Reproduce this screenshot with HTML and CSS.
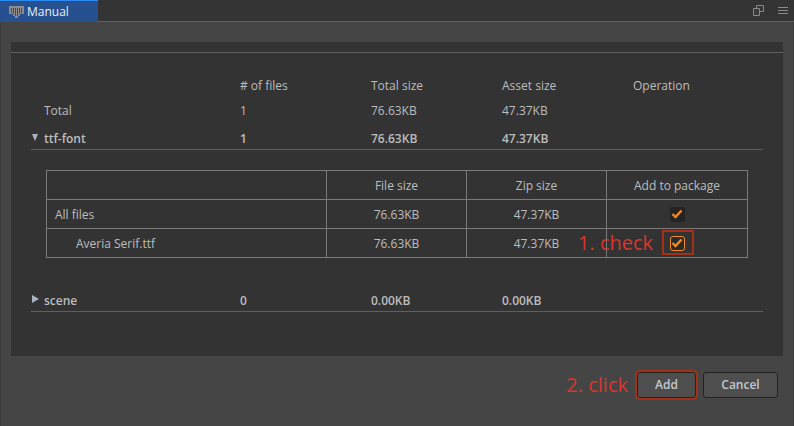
FILE: index.html
```html
<!DOCTYPE html>
<html lang="en">
<head>
    <meta charset="UTF-8">
    <title>Manual</title>
    <link rel="stylesheet" href="styles.css">
</head>
<body>
    <div class="tabbar">
        <div class="tab">
            <svg class="tab-icon" width="15" height="12" viewBox="0 0 15 12">
                <path d="M0 0h15v8h-4v2h-2v2h-3v-2h-2v-2h-4z" fill="#8c8c8c"/>
                <path d="M2.5 2v5M4.5 2v6M6.5 2v8M8.5 2v8M10.5 2v6M12.5 2v5" stroke="#4c4c4c" stroke-width="1" fill="none"/>
            </svg>
            <span>Manual</span>
        </div>
        <div class="tab-tools">
            <svg width="11" height="11" viewBox="0 0 11 11">
                <path d="M3.5 .5h7v6h-7z" fill="none" stroke="#8a8a8a"/>
                <path d="M.5 3.5h6v7h-6z" fill="#3a3a3a" stroke="#8a8a8a"/>
            </svg>
            <svg width="10" height="9" viewBox="0 0 10 9">
                <path d="M0 1.5h10M0 4.5h10M0 7.5h10" stroke="#8a8a8a"/>
            </svg>
        </div>
    </div>

    <div class="main">
        <div class="panel">
            <div class="panel-top"></div>

            <div class="row head-row">
                <span></span><span># of files</span><span>Total size</span><span>Asset size</span><span>Operation</span>
            </div>
            <div class="row total-row">
                <span>Total</span><span>1</span><span>76.63KB</span><span>47.37KB</span><span></span>
            </div>
            <div class="row group-row">
                <span class="group-name"><i class="arrow-down"></i>ttf-font</span><span>1</span><span>76.63KB</span><span>47.37KB</span><span></span>
            </div>

            <div class="files">
                <div class="cell"></div>
                <div class="cell center">File size</div>
                <div class="cell center">Zip size</div>
                <div class="cell center">Add to package</div>

                <div class="cell">All files</div>
                <div class="cell center">76.63KB</div>
                <div class="cell center">47.37KB</div>
                <div class="cell center"><span class="check"><svg width="12" height="10" viewBox="0 0 12 10"><path d="M1.5 5l3 3 6-6.500" fill="none" stroke="#f58a24" stroke-width="2.400"/></svg></span></div>

                <div class="cell indent">Averia Serif.ttf</div>
                <div class="cell center">76.63KB</div>
                <div class="cell center">47.37KB</div>
                <div class="cell center"><span class="check hot"><svg width="12" height="10" viewBox="0 0 12 10"><path d="M1.5 5l3 3 6-6.500" fill="none" stroke="#f58a24" stroke-width="2.400"/></svg></span></div>
            </div>

            <div class="row group-row scene-row">
                <span class="group-name"><i class="arrow-right"></i>scene</span><span>0</span><span>0.00KB</span><span>0.00KB</span><span></span>
            </div>

            <div class="note note-check">1. check</div>
            <div class="mark mark-check"></div>
        </div>

        <div class="footer">
            <div class="note note-click">2. click</div>
            <button class="btn btn-add">Add</button>
            <button class="btn">Cancel</button>
        </div>
    </div>
</body>
</html>
```

FILE: styles.css
```css
html, body {
    margin: 0;
    padding: 0;
}
body {
    width: 794px;
    height: 426px;
    overflow: hidden;
    background-color: #454545;
    color: #bdbdbd;
    font-family: Tahoma, "Open Sans", sans-serif;
    font-size: 12px;
}
.tabbar {
    display: flex;
    justify-content: space-between;
    height: 21px;
    background-color: #343434;
    border-bottom: 1px solid #5f5f5f;
}
.tab {
    display: flex;
    align-items: center;
    gap: 3px;
    box-sizing: border-box;
    width: 98px;
    height: 22px;
    padding-left: 9px;
    background-color: #26508f;
    border-top: 1px solid #2a8bf0;
    color: #e8eef6;
    font-size: 12px;
}
.tab-tools {
    display: flex;
    align-items: center;
    gap: 14px;
    padding-right: 6px;
}
.main {
    height: 404px;
    box-sizing: border-box;
    padding: 20px 10px 0;
    border-left: 1px solid #3a3a3a;
    border-right: 1px solid #3a3a3a;
}
.panel {
    position: relative;
    box-sizing: border-box;
    height: 314px;
    background-color: #333;
}
.panel-top {
    height: 10px;
    border-bottom: 1px solid #5f5f5f;
}
.row {
    display: grid;
    grid-template-columns: 196px 131px 131px 131px 1fr;
    align-items: center;
    box-sizing: border-box;
    width: 732px;
    margin: 0 20px;
    padding-left: 13px;
    height: 28px;
}
.head-row {
    height: 19px;
    margin-top: 23px;
    margin-bottom: 1px;
}
.group-row {
    height: 26px;
    padding-top: 4px;
    border-bottom: 1px solid #5f5f5f;
    font-weight: 600;
}
.group-name {
    position: relative;
}
.arrow-down, .arrow-right {
    position: absolute;
    left: -12px;
    top: 4px;
    width: 0;
    height: 0;
}
.arrow-down {
    border-left: 3.5px solid transparent;
    border-right: 3.5px solid transparent;
    border-top: 7px solid #aab4c0;
}
.arrow-right {
    top: 3px;
    border-top: 4px solid transparent;
    border-bottom: 4px solid transparent;
    border-left: 7px solid #aab4c0;
}
.files {
    display: grid;
    grid-template-columns: 280px 140px 140px 141px;
    grid-auto-rows: 29px;
    width: 702px;
    margin: 20px 0 0 35px;
    border-top: 1px solid #7b7b7b;
    border-left: 1px solid #7b7b7b;
    box-sizing: border-box;
}
.cell {
    display: flex;
    align-items: center;
    box-sizing: border-box;
    padding-left: 8px;
    border-right: 1px solid #7b7b7b;
    border-bottom: 1px solid #7b7b7b;
}
.center {
    justify-content: center;
    padding-left: 0;
}
.indent {
    padding-left: 29px;
}
.check {
    display: flex;
    align-items: center;
    justify-content: center;
    flex: none;
    box-sizing: border-box;
    width: 15px;
    height: 15px;
    background-color: #242424;
    border-radius: 3px;
}
.check.hot {
    border: 1px solid #f58a24;
    background-color: #2a2a2a;
}
.scene-row {
    margin-top: 28px;
}
.note {
    color: #d8362e;
    font-family: "Open Sans", sans-serif;
    font-size: 20px;
}
.note-check {
    position: absolute;
    left: 567px;
    top: 187px;
}
.mark {
    position: absolute;
    box-sizing: border-box;
    border: 2px solid #a5301a;
}
.mark-check {
    left: 651px;
    top: 188px;
    width: 32px;
    height: 25px;
}
.footer {
    display: flex;
    align-items: center;
    justify-content: flex-end;
    margin-top: 15px;
    padding-right: 5px;
}
.note-click {
    margin-right: 9px;
}
.btn {
    box-sizing: border-box;
    width: 75px;
    height: 26px;
    margin-left: 7px;
    background-color: #4e4e4e;
    border: 1px solid #232323;
    border-radius: 3px;
    color: #c3c8ce;
    font-family: Tahoma, "Open Sans", sans-serif;
    font-size: 12px;
    font-weight: 600;
}
.btn-add {
    width: 59px;
    margin-left: 0;
    outline: 2px solid #a5301a;
}
```
